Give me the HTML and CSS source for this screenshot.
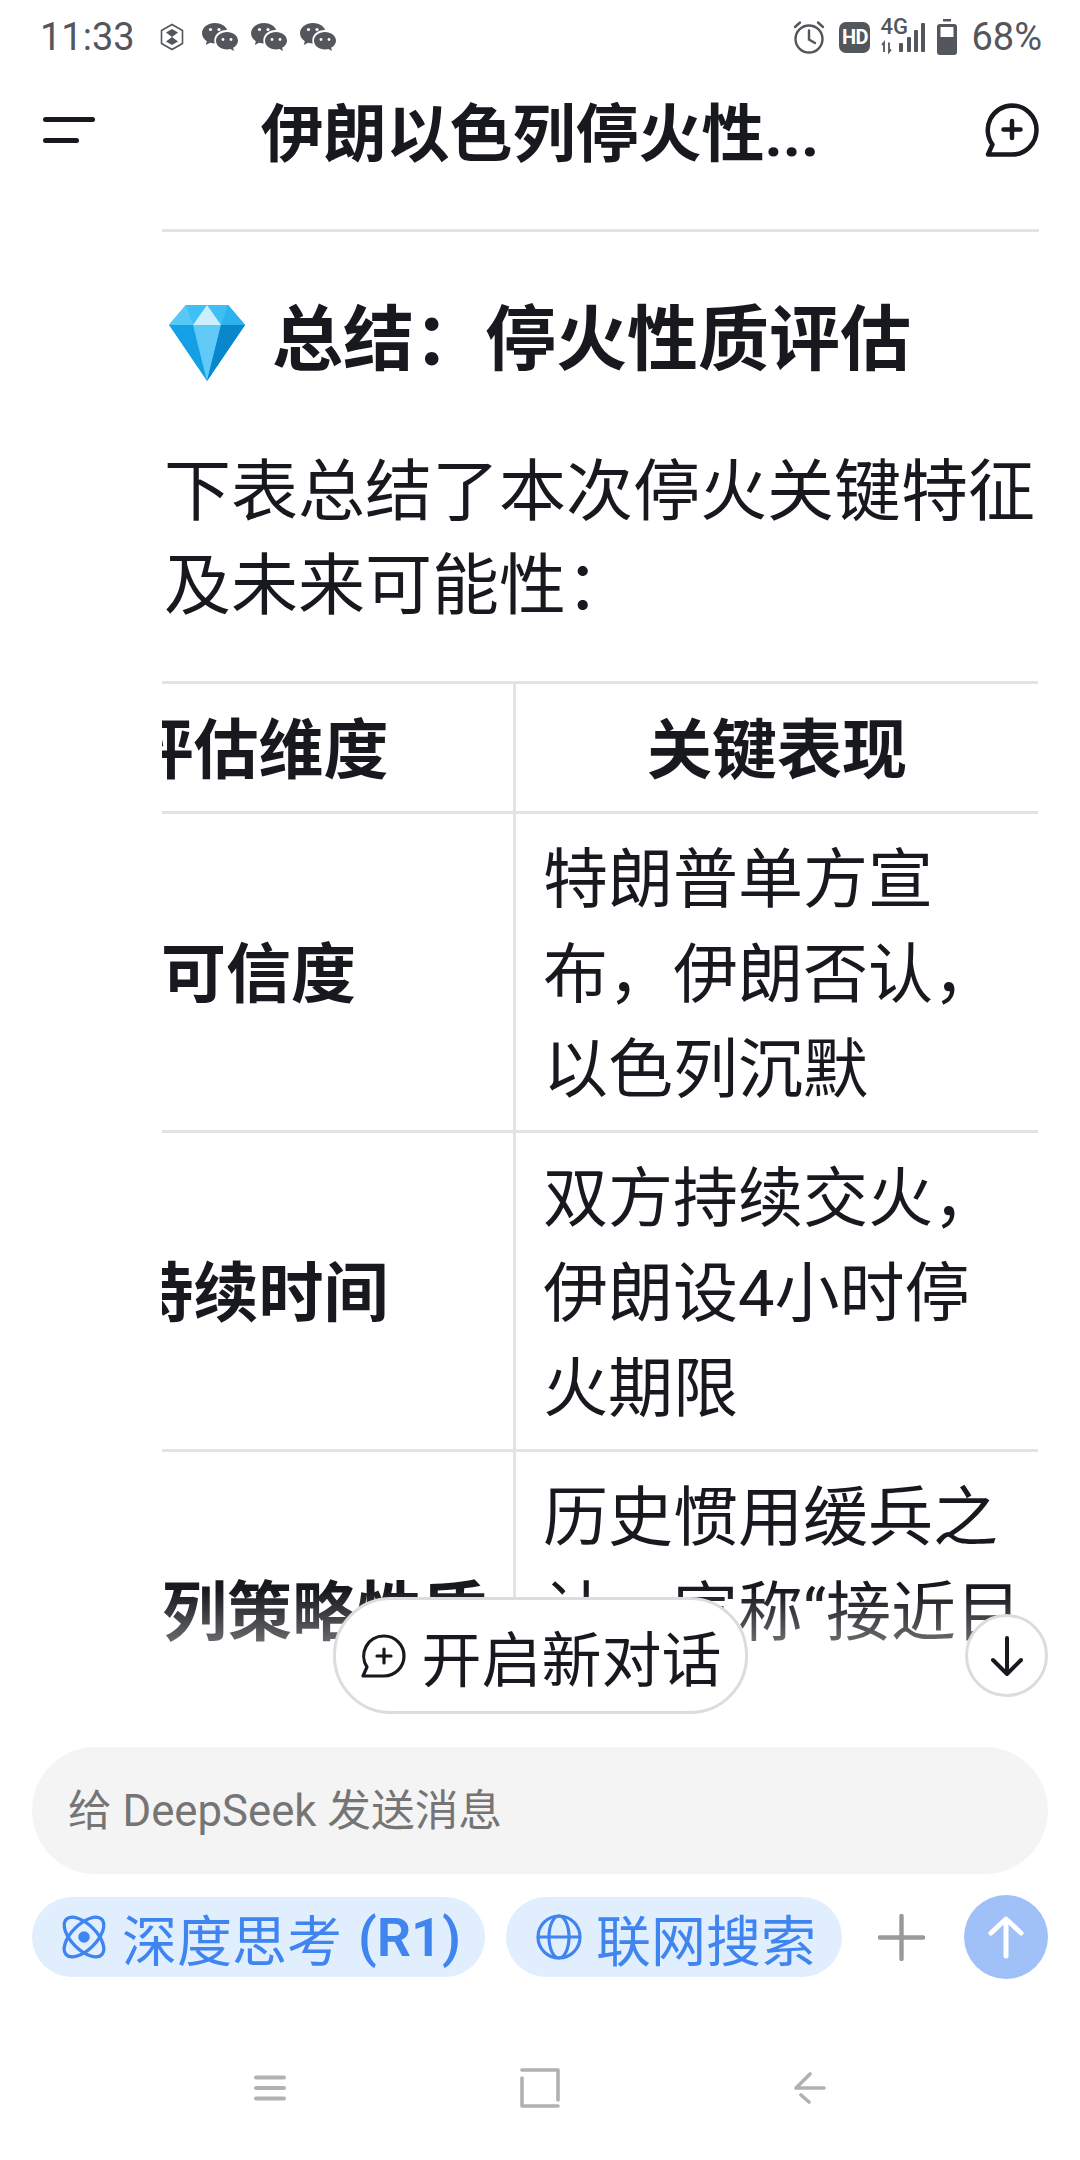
FILE: index.html
```html
<!DOCTYPE html>
<html lang="zh">
<head>
    <meta charset="UTF-8">
    <meta name="viewport" content="width=device-width, initial-scale=1.0">
    <title>DeepSeek</title>
    <link rel="stylesheet" href="styles.css">
</head>
<body>
    <div class="status-bar">
        <div class="status-left">
            <span class="time">11:33</span>
            <svg class="hex-icon" viewBox="0 0 24 28"><path d="M12 1.500 22.500 7.500V20.500L12 26.500 1.500 20.500V7.500Z" fill="none" stroke="#53565c" stroke-width="1.600"/><path d="M6 9.500 12 6l6 3.500-6 4.500ZM6 18.500l6-4.500 6 4.500L12 22Z" fill="#53565c"/></svg>
            <svg class="wechat-icon" viewBox="0 0 36 29"><use href="#wechat"/></svg>
            <svg class="wechat-icon" viewBox="0 0 36 29"><use href="#wechat"/></svg>
            <svg class="wechat-icon" viewBox="0 0 36 29"><use href="#wechat"/></svg>
        </div>
        <div class="status-right">
            <svg class="alarm-icon" viewBox="0 0 32 34" fill="none" stroke="#53565c" stroke-width="2.400" stroke-linecap="round"><circle cx="16" cy="19" r="13.500"/><path d="M16 10.500V19.500L22 23M2 7l5-4.500M30 7l-5-4.500"/></svg>
            <span class="hd-badge">HD</span>
            <div class="net">
                <span class="net-label">4G</span>
                <svg class="signal-icon" viewBox="0 0 45 34" fill="#53565c"><path d="M4 32V22.500L2 25M9 22.500V32L11 29.500" fill="none" stroke="#53565c" stroke-width="1.800"/><rect x="19" y="23" width="4" height="9" rx="1"/><rect x="27" y="17" width="4" height="15" rx="1"/><rect x="34" y="10" width="4" height="22" rx="1"/><rect x="41" y="3" width="4" height="29" rx="1"/></svg>
            </div>
            <svg class="battery-icon" viewBox="0 0 20 36"><path d="M6 0h8v2.500H6z" fill="#53565c"/><path fill-rule="evenodd" d="M3 5h14a3 3 0 0 1 3 3v25a3 3 0 0 1-3 3H3a3 3 0 0 1-3-3V8a3 3 0 0 1 3-3Zm.500 3v10h13V8Z" fill="#53565c"/></svg>
            <span class="battery-text">68%</span>
        </div>
    </div>

    <header class="top-bar">
        <div class="menu-btn"><span class="menu-line-long"></span><span class="menu-line-short"></span></div>
        <h1 class="chat-title">伊朗以色列停火性...</h1>
        <svg class="new-chat-icon" viewBox="0 0 54 54" fill="none" stroke="#17191e" stroke-width="4.500" stroke-linecap="round" stroke-linejoin="round"><path d="M27 2.500a24.500 24.500 0 0 1 0 49H3l4.500-10A24.500 24.500 0 0 1 27 2.500ZM27 18v17M18.500 26.500h17"/></svg>
    </header>

    <main class="chat-area">
        <hr class="divider">
        <h2 class="section-title">
            <svg class="gem" viewBox="0 0 76 76">
                <path d="M17 0H59L76 20 38 76 0 20Z" fill="#14a0e6"/>
                <path d="M17 0H59L76 20H0Z" fill="#3fc0f4"/>
                <path d="M17 0 24 20H0Z" fill="#58c8f6"/>
                <path d="M59 0 52 20H76Z" fill="#2cb2ee"/>
                <path d="M38 0 52 20H24Z" fill="#cdeffd"/>
                <path d="M24 20H52L38 76Z" fill="#62caf6"/>
                <path d="M52 20H76L38 76Z" fill="#0a86cc"/>
            </svg>
            <span>总结：停火性质评估</span>
        </h2>
        <p class="intro">下表总结了本次停火关键特征及未来可能性：</p>

        <div class="table-scroll">
            <table class="summary-table">
                <tr>
                    <th>评估维度</th>
                    <th>关键表现</th>
                </tr>
                <tr>
                    <td class="row-name">可信度</td>
                    <td>特朗普单方宣布，伊朗否认，以色列沉默</td>
                </tr>
                <tr>
                    <td class="row-name">持续时间</td>
                    <td>双方持续交火，伊朗设4小时停火期限</td>
                </tr>
                <tr>
                    <td class="row-name">以色列策略性质</td>
                    <td>历史惯用缓兵之计，宣称“接近目标”</td>
                </tr>
            </table>
        </div>

        <div class="fade"></div>
        <button class="new-chat-pill">
            <svg class="pill-icon" viewBox="0 0 46 46" fill="none" stroke="#17191e" stroke-width="3.200" stroke-linecap="round" stroke-linejoin="round"><path d="M24 3a20 20 0 0 1 0 40H3l4-9A20 20 0 0 1 24 3ZM24 16v14M17 23h14"/></svg>
            开启新对话
        </button>
        <button class="scroll-down">
            <svg viewBox="0 0 40 42" fill="none" stroke="#17191e" stroke-width="4" stroke-linecap="round" stroke-linejoin="round"><path d="M20 3V39M6 25 20 39 34 25"/></svg>
        </button>
    </main>

    <section class="composer">
        <div class="message-input"><span>给 DeepSeek 发送消息</span></div>
        <div class="composer-actions">
            <button class="chip chip-think">
                <svg class="chip-icon" viewBox="0 0 46 46" fill="none" stroke="#3f84ef" stroke-width="3.200"><ellipse cx="23" cy="23" rx="24" ry="12" transform="rotate(45 23 23)"/><ellipse cx="23" cy="23" rx="24" ry="12" transform="rotate(-45 23 23)"/><circle cx="23" cy="23" r="5.500" fill="#3f84ef" stroke="none"/></svg>
                深度思考 <b>(R1)</b>
            </button>
            <button class="chip chip-search">
                <svg class="chip-icon" viewBox="0 0 46 46" fill="none" stroke="#3f84ef" stroke-width="3.200"><circle cx="23" cy="23" r="21"/><ellipse cx="23" cy="23" rx="10" ry="21"/><path d="M2 23H44"/></svg>
                联网搜索
            </button>
            <svg class="plus-icon" viewBox="0 0 47 47" stroke="#999" stroke-width="4.400" stroke-linecap="round"><path d="M23.500 2V45M2 23.500H45"/></svg>
            <button class="send-btn">
                <svg viewBox="0 0 36 44" fill="none" stroke="#fff" stroke-width="5" stroke-linecap="round" stroke-linejoin="round"><path d="M18 4V41M3 18 18 4 33 18"/></svg>
            </button>
        </div>
    </section>

    <nav class="nav-bar">
        <svg class="nav-menu" viewBox="0 0 32 26" stroke="#b1b1b5" stroke-width="4" stroke-linecap="round"><path d="M2 2.500H30M2 13H30M2 23.500H30"/></svg>
        <svg class="nav-home" viewBox="0 0 40 40" fill="none" stroke="#b1b1b5" stroke-width="3.600" stroke-linecap="round" stroke-linejoin="round"><path d="M2 2H38V32M38 38H2V10"/></svg>
        <svg class="nav-back" viewBox="0 0 32 32" fill="none" stroke="#b1b1b5" stroke-width="3.600" stroke-linecap="round" stroke-linejoin="round"><path d="M16 2 2 16H30M7 23 15 30"/></svg>
    </nav>

    <svg class="sprites" width="0" height="0">
        <symbol id="wechat" viewBox="0 0 36 29">
            <path d="M13 0C5.800 0 0 4.600 0 10.300c0 3.200 1.900 6 4.800 7.900L3.800 22l4.300-2.300c1.400.4 3 .700 4.600.700-.300-1-.400-2-.400-3 0-5.900 5.500-10.500 12-10.500h.800C23.800 2.900 18.900 0 13 0Z" fill="#53565c"/>
            <path d="M25 9c-6 0-11 3.900-11 8.700 0 4.800 5 8.800 11 8.800 1.200 0 2.400-.200 3.500-.500l3.500 2-.900-3.200c2.900-1.600 4.900-4.200 4.900-7.100C36 12.900 31 9 25 9Z" fill="#53565c"/>
            <circle cx="8.500" cy="6.500" r="1.600" fill="#fff"/><circle cx="17" cy="6.500" r="1.600" fill="#fff"/>
            <circle cx="21" cy="16.500" r="1.400" fill="#fff"/><circle cx="29" cy="16.500" r="1.400" fill="#fff"/>
        </symbol>
    </svg>
</body>
</html>
```

FILE: styles.css
```css
* {
    box-sizing: border-box;
}
body {
    width: 1080px;
    height: 2160px;
    margin: 0;
    overflow: hidden;
    display: flex;
    flex-direction: column;
    background-color: #fff;
    color: #17191e;
    font-family: Roboto, 'Noto Sans CJK SC', sans-serif;
}
button {
    font-family: inherit;
    border: none;
    padding: 0;
}
.sprites {
    position: absolute;
}

/* status bar */
.status-bar {
    height: 76px;
    flex-shrink: 0;
    padding: 19px 38px 0 40px;
    display: flex;
    justify-content: space-between;
    align-items: flex-start;
    color: #53565c;
}
.status-left,
.status-right {
    display: flex;
    align-items: center;
    height: 36px;
}
.time {
    font-size: 38px;
    width: 120px;
}
.hex-icon {
    width: 24px;
    height: 28px;
    margin-right: 18px;
}
.wechat-icon {
    width: 36px;
    height: 29px;
    margin-right: 13px;
}
.alarm-icon {
    width: 32px;
    height: 34px;
    margin-right: 14px;
}
.hd-badge {
    width: 31px;
    height: 31px;
    margin-right: 10px;
    border-radius: 7px;
    background-color: #53565c;
    color: #fff;
    font-size: 20px;
    font-weight: 700;
    line-height: 31px;
    text-align: center;
    letter-spacing: -0.5px;
}
.net {
    position: relative;
    width: 45px;
    height: 34px;
    margin-right: 12px;
}
.net-label {
    position: absolute;
    left: 0;
    top: -3px;
    font-size: 22px;
    font-weight: 500;
    line-height: 20px;
}
.signal-icon {
    width: 45px;
    height: 34px;
    display: block;
}
.battery-icon {
    width: 20px;
    height: 36px;
    margin-right: 14px;
}
.battery-text {
    font-size: 38px;
}

/* header */
.top-bar {
    height: 114px;
    flex-shrink: 0;
    padding: 0 41px 7px 43px;
    display: flex;
    align-items: center;
    justify-content: space-between;
}
.menu-btn {
    width: 52px;
    display: flex;
    flex-direction: column;
    gap: 16px;
}
.menu-btn span {
    display: block;
    height: 5px;
    border-radius: 3px;
    background-color: #17191e;
}
.menu-line-long {
    width: 52px;
}
.menu-line-short {
    width: 36px;
}
.chat-title {
    margin: 10px 0 0;
    font-size: 63px;
    font-weight: 700;
    line-height: 1;
    white-space: nowrap;
}
.new-chat-icon {
    width: 54px;
    height: 54px;
}

/* conversation */
.chat-area {
    position: relative;
    height: 1557px;
    flex-shrink: 0;
    padding: 39px 41px 0 162px;
    overflow: hidden;
}
.divider {
    height: 3px;
    margin: 0;
    border: none;
    background-color: #e3e3e3;
}
.section-title {
    margin: 63px 0 0 7px;
    display: flex;
    align-items: center;
    gap: 27px;
    font-size: 71px;
    font-weight: 700;
    line-height: 90px;
}
.gem {
    width: 76px;
    height: 76px;
    margin-top: 6px;
}
.intro {
    margin: 60px 0 0;
    font-size: 67px;
    line-height: 94px;
    padding-left: 2px;
}
.table-scroll {
    margin-top: 48px;
    overflow: hidden;
}
.summary-table {
    margin-left: -158px;
    width: 1034px;
    table-layout: fixed;
    border-collapse: separate;
    border-spacing: 0;
    border-top: 3px solid #e3e3e3;
    font-size: 65px;
    line-height: 95px;
}
.summary-table th,
.summary-table td {
    padding: 19px 15px 12px 27px;
    border-bottom: 3px solid #e3e3e3;
    border-left: 3px solid #e3e3e3;
    word-break: break-all;
}
.summary-table th:first-child,
.summary-table td:first-child {
    width: 509px;
    padding-left: 28px;
    padding-right: 28px;
    border-left: none;
    white-space: nowrap;
    text-align: center;
}
.summary-table th {
    height: 130px;
    padding: 8px 27px 0;
    font-weight: 700;
}
.row-name {
    font-weight: 700;
}
.fade {
    position: absolute;
    left: 0;
    right: 0;
    bottom: 0;
    height: 157px;
    background: linear-gradient(to bottom, rgba(255,255,255,0), rgba(255,255,255,0.35) 33%, #fff 70%);
}
.new-chat-pill {
    position: absolute;
    left: 333px;
    top: 1407px;
    width: 415px;
    height: 117px;
    display: flex;
    align-items: center;
    justify-content: center;
    gap: 16px;
    border: 3px solid #dcdcdc;
    border-radius: 58px;
    background-color: #fff;
    color: #17191e;
    font-size: 60px;
}
.pill-icon {
    width: 46px;
    height: 46px;
}
.scroll-down {
    position: absolute;
    left: 965px;
    top: 1424px;
    width: 83px;
    height: 83px;
    display: flex;
    align-items: center;
    justify-content: center;
    border: 3px solid #dcdcdc;
    border-radius: 50%;
    background-color: #fff;
}
.scroll-down svg {
    width: 40px;
    height: 42px;
}

/* composer */
.composer {
    padding: 0 32px;
    flex-shrink: 0;
}
.message-input {
    height: 127px;
    padding: 0 36px 8px;
    display: flex;
    align-items: center;
    border-radius: 64px;
    background-color: #f4f4f4;
    color: #757575;
    font-size: 43.7px;
}
.composer-actions {
    margin-top: 21px;
    display: flex;
    align-items: center;
    height: 84px;
}
.chip {
    height: 80px;
    display: flex;
    align-items: center;
    gap: 14px;
    border-radius: 40px;
    background-color: #e0eefe;
    color: #3f84ef;
    font-size: 55px;
    white-space: nowrap;
}
.chip b {
    font-size: 54px;
    font-weight: 600;
    margin-left: 2px;
}
.chip-think {
    width: 453px;
    padding-left: 28px;
    margin-right: 21px;
}
.chip-think .chip-icon {
    width: 48px;
    height: 48px;
}
.chip-search {
    width: 336px;
    padding-left: 30px;
}
.chip-icon {
    width: 46px;
    height: 46px;
}
.plus-icon {
    width: 47px;
    height: 47px;
    margin-left: 36px;
}
.send-btn {
    width: 84px;
    height: 84px;
    margin-left: auto;
    display: flex;
    align-items: center;
    justify-content: center;
    border-radius: 50%;
    background-color: #9fc1f7;
}
.send-btn svg {
    width: 36px;
    height: 44px;
}

/* system nav */
.nav-bar {
    position: relative;
    flex: 1;
}
.nav-bar svg {
    position: absolute;
}
.nav-menu {
    left: 254px;
    top: 96px;
    width: 32px;
    height: 26px;
}
.nav-home {
    left: 520px;
    top: 89px;
    width: 40px;
    height: 40px;
}
.nav-back {
    left: 794px;
    top: 93px;
    width: 32px;
    height: 32px;
}
```
